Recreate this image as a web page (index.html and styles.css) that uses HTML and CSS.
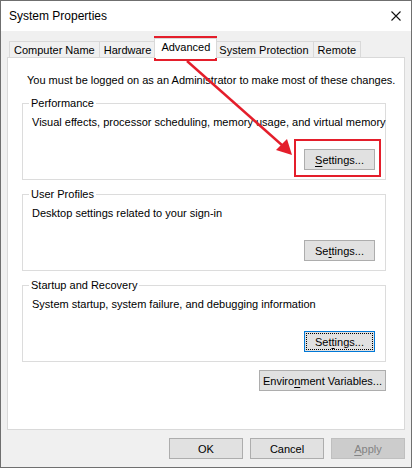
FILE: index.html
```html
<!DOCTYPE html>
<html>
<head>
  <meta charset="UTF-8">
  <title>System Properties</title>
  <link rel="stylesheet" href="styles.css">
</head>
<body>

  <div class="window">
    <div class="titlebar">
      <span class="title">System Properties</span>
      <svg class="close" width="10" height="10" viewBox="0 0 10 10">
        <path d="M0.5 0.5 L9.5 9.5 M9.5 0.5 L0.5 9.5" stroke="#111" stroke-width="1.1" fill="none"/>
      </svg>
    </div>

    <div class="content">
      <div class="tabs">
        <div class="tab">Computer Name</div>
        <div class="tab">Hardware</div>
        <div class="tab active">Advanced</div>
        <div class="tab">System Protection</div>
        <div class="tab">Remote</div>
      </div>

      <div class="panel">
        <p class="note">You must be logged on as an Administrator to make most of these changes.</p>

        <fieldset class="group">
          <legend>Performance</legend>
          <p class="desc">Visual effects, processor scheduling, memory usage, and virtual memory</p>
          <div class="row-right">
            <button class="btn small"><u>S</u>ettings...</button>
          </div>
        </fieldset>

        <fieldset class="group">
          <legend>User Profiles</legend>
          <p class="desc">Desktop settings related to your sign-in</p>
          <div class="row-right">
            <button class="btn small">Se<u>t</u>tings...</button>
          </div>
        </fieldset>

        <fieldset class="group">
          <legend>Startup and Recovery</legend>
          <p class="desc">System startup, system failure, and debugging information</p>
          <div class="row-right">
            <button class="btn small focused">Set<u>t</u>ings...</button>
          </div>
        </fieldset>

        <div class="row-right env-row">
          <button class="btn env">Enviro<u>n</u>ment Variables...</button>
        </div>
      </div>

      <div class="footer">
        <button class="btn dlg">OK</button>
        <button class="btn dlg">Cancel</button>
        <button class="btn dlg disabled"><u>A</u>pply</button>
      </div>
    </div>

    <!-- red annotation drawn over the dialog -->
    <svg class="marks" width="412" height="468" viewBox="0 0 412 468">
      <rect x="155" y="37" width="61" height="23" fill="none" stroke="#e41e2b" stroke-width="2"/>
      <rect x="295" y="140" width="85" height="36" fill="none" stroke="#e41e2b" stroke-width="2"/>
      <line x1="187" y1="61" x2="283" y2="146" stroke="#e41e2b" stroke-width="2.4"/>
      <polygon points="292,155 276,150 287,139" fill="#e41e2b"/>
    </svg>
  </div>

</body>
</html>
```

FILE: styles.css
```css
* {
  box-sizing: border-box;
}

body {
  margin: 0;
  font-family: "Liberation Sans", Arial, sans-serif;
  font-size: 11px;
  color: #000;
  background: #fff;
}

.window {
  position: relative;
  width: 412px;
  height: 468px;
  border: 1px solid #6f6f6f;
  background: #f0f0f0;
}

.titlebar {
  height: 30px;
  background: #fff;
  display: flex;
  align-items: center;
  justify-content: space-between;
  padding: 0 10px 0 8px;
}

.title {
  font-size: 12px;
}

.content {
  padding: 0 6px;
}

.tabs {
  display: flex;
  align-items: flex-end;
  height: 20px;
  margin-top: 7px;
  margin-left: 2px;
  margin-bottom: -1px;
}

.tab {
  height: 16px;
  margin-bottom: 1px;
  margin-left: -1px;
  padding: 0 4px;
  line-height: 16px;
  border: 1px solid #d9d9d9;
  border-bottom: none;
  background: #f0f0f0;
  white-space: nowrap;
}

.tab:first-child {
  margin-left: 0;
}

.tab.active {
  position: relative;
  z-index: 1;
  height: 20px;
  margin: 0 -2px 0 -2px;
  padding: 0 6px;
  line-height: 17px;
  background: #fff;
}

.panel {
  height: 373px;
  background: #fff;
  border: 1px solid #d9d9d9;
  padding: 14px 18px 0 14px;
}

.note {
  margin: 0 0 7px 5px;
  line-height: 16px;
  white-space: nowrap;
}

.group {
  margin: 0 0 6px 0;
  padding: 0 10px 9px 6px;
  border: 1px solid #dcdcdc;
  min-width: 0;
}

.group legend {
  padding: 0 2px;
  line-height: 16px;
}

.desc {
  margin: 3px 0 19px 3px;
  line-height: 16px;
  white-space: nowrap;
}

.row-right {
  display: flex;
  justify-content: flex-end;
}

.btn {
  height: 21px;
  padding: 0;
  font-family: inherit;
  font-size: 11px;
  color: #000;
  background: #e1e1e1;
  border: 1px solid #adadad;
  border-radius: 0;
  white-space: nowrap;
}

.btn u {
  text-decoration-thickness: 1px;
  text-underline-offset: 2px;
}

.small {
  width: 71px;
}

.focused {
  border-color: #0078d7;
  outline: 1px dotted #000;
  outline-offset: -3px;
}

.env-row {
  margin-top: 8px;
}

.env {
  width: 127px;
}

.footer {
  display: flex;
  justify-content: flex-end;
  gap: 7px;
  margin-top: 8px;
}

.dlg {
  width: 74px;
}

.disabled {
  background: #cccccc;
  border-color: #bfbfbf;
  color: #838383;
}

.marks {
  position: absolute;
  top: -1px;
  left: -1px;
  pointer-events: none;
}
```
